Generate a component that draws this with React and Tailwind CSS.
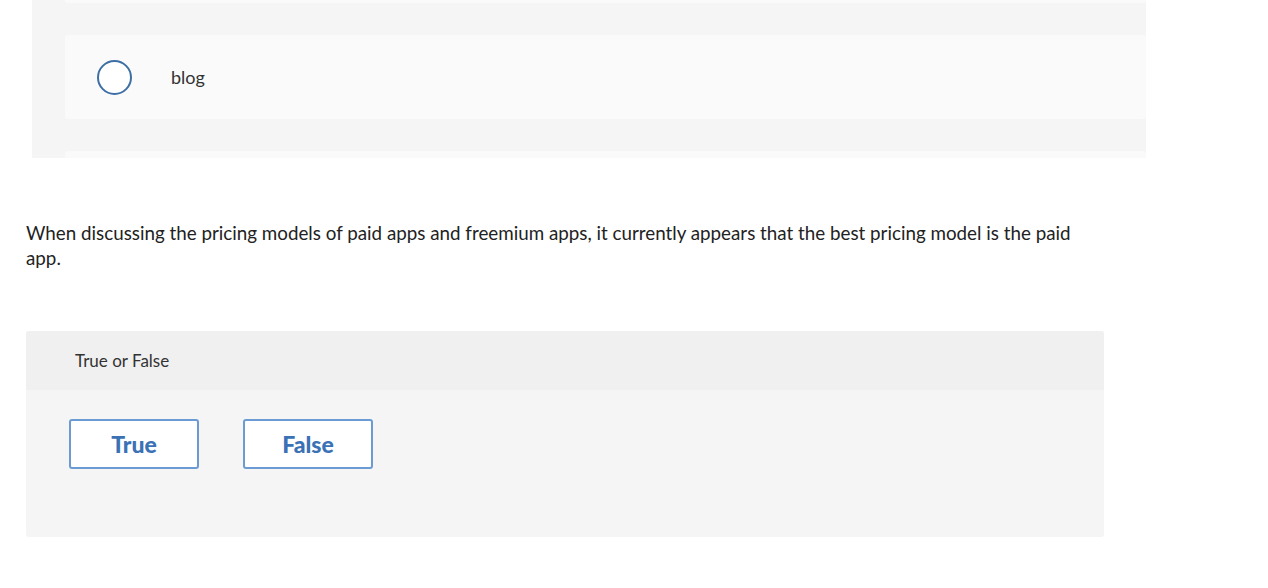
export default function App() {
  return (
    <div className="min-h-[588px] bg-white font-['Lato',sans-serif] text-[#333]">
      {/* previous question, scrolled */}
      <div className="ml-[32px] w-[1114px] h-[158px] overflow-hidden bg-[#f5f5f5] pl-[33px] flex flex-col gap-[32px]">
        <div className="h-[3px] shrink-0 bg-[#fafafa] rounded-b-[3px]" />
        <div className="h-[84px] shrink-0 bg-[#fafafa] rounded-[3px] flex items-center">
          <span className="ml-[32px] w-[35px] h-[35px] rounded-full border-2 border-[#3d6fa5] bg-white" />
          <span className="ml-[39px] text-[18px] text-[#333]">blog</span>
        </div>
        <div className="h-[84px] shrink-0 bg-[#fafafa] rounded-[3px]" />
      </div>

      <p className="mt-[62px] ml-[26px] w-[1078px] text-[18.8px] leading-[25px] text-[#222]">
        When discussing the pricing models of paid apps and freemium apps, it currently appears that the best pricing
        model is the paid app.
      </p>

      <div className="mt-[61px] ml-[26px] w-[1078px] h-[206px] rounded-[3px] bg-[#f5f5f5] overflow-hidden">
        <div className="h-[59px] bg-[#f0f0f0] flex items-center pl-[49px] text-[17px] text-[#333]">True or False</div>
        <div className="flex gap-[44px] pl-[43px] pt-[29px]">
          <button className="w-[130px] h-[50px] rounded-[3px] border-2 border-[#6b9bd2] bg-white text-[23px] font-black text-[#3a72b5]">
            True
          </button>
          <button className="w-[130px] h-[50px] rounded-[3px] border-2 border-[#6b9bd2] bg-white text-[23px] font-black text-[#3a72b5]">
            False
          </button>
        </div>
      </div>
    </div>
  );
}
